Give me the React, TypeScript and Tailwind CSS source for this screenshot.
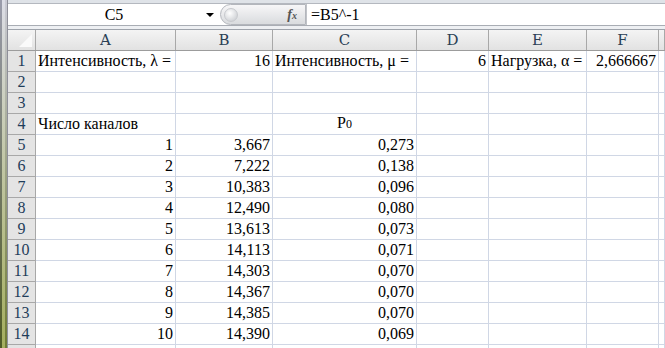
const COLS = [
  { key: "A", w: "w-[140px]" },
  { key: "B", w: "w-[97px]" },
  { key: "C", w: "w-[144px]" },
  { key: "D", w: "w-[72px]" },
  { key: "E", w: "w-[98px]" },
  { key: "F", w: "w-[72px]" },
  { key: "", w: "flex-1" },
];

type Cell = { text?: React.ReactNode; align?: "l" | "r" | "c" };

const B_VALS = ["3,667", "7,222", "10,383", "12,490", "13,613", "14,113", "14,303", "14,367", "14,385", "14,390"];
const C_VALS = ["0,273", "0,138", "0,096", "0,080", "0,073", "0,071", "0,070", "0,070", "0,070", "0,069"];

const ROWS: Cell[][] = [
  [
    { text: "Интенсивность, λ =", align: "l" },
    { text: "16", align: "r" },
    { text: "Интенсивность, μ =", align: "l" },
    { text: "6", align: "r" },
    { text: "Нагрузка, α =", align: "l" },
    { text: "2,666667", align: "r" },
  ],
  [],
  [],
  [
    { text: "Число каналов", align: "l" },
    {},
    {
      text: (
        <span>
          P<span className="text-[12px]">0</span>
        </span>
      ),
      align: "c",
    },
  ],
  ...B_VALS.map((b, i) => [
    { text: String(i + 1), align: "r" as const },
    { text: b, align: "r" as const },
    { text: C_VALS[i], align: "r" as const },
  ]),
];

const serif = "font-['Liberation_Serif','Times_New_Roman',serif]";

export default function App() {
  return (
    <div className={`w-[665px] h-[348px] overflow-hidden flex bg-white text-black ${serif}`}>
      {/* window edge */}
      <div className="w-[8px] h-full flex shrink-0">
        <div className="w-[2px] h-full bg-[linear-gradient(#9a9cab,#4f5a25)]" />
        <div className="w-[3px] h-full bg-[linear-gradient(#dcdde6,#a4ae5e)]" />
        <div className="w-[2px] h-full bg-[linear-gradient(#c9cad4,#6f7b34)]" />
        <div className="w-[1px] h-full bg-[#8e8f99]" />
      </div>

      <div className="flex-1 flex flex-col min-w-0">
        {/* formula bar */}
        <div className="h-[30px] bg-[#e3e6eb] flex flex-col shrink-0">
          <div className="h-[4px] bg-[#dfe3e8] border-b border-[#b4b8bf]" />
          <div className="h-[22px] flex items-stretch bg-white border-b border-[#a9adb4]">
            <div className={`w-[212px] relative flex items-center justify-center text-[16px] ${serif}`}>
              C5
              <span className="absolute right-[6px] top-[9px] w-0 h-0 border-l-[4px] border-r-[4px] border-t-[4px] border-l-transparent border-r-transparent border-t-black" />
            </div>
            <div className="w-[86px] rounded-l-[11px] border border-[#b3b6bc] bg-[linear-gradient(#f7f7f8,#d9dbde)] flex items-center justify-between pl-[3px] pr-[8px]">
              <span className="w-[14px] h-[14px] rounded-full bg-[radial-gradient(circle_at_40%_35%,#ffffff,#c3c6cb)] border border-[#c8cace]" />
              <span className={`italic text-[14px] text-[#555] font-bold ${serif}`}>
                f<span className="text-[10px]">x</span>
              </span>
            </div>
            <div className={`flex-1 flex items-center pl-[4px] text-[16px] border-l border-[#c0c3c8] ${serif}`}>=B5^-1</div>
          </div>
          <div className="flex-1 bg-[#eef0f3] border-b border-[#9ea3ab]" />
        </div>

        {/* column headers */}
        <div className="h-[21px] flex shrink-0 bg-[linear-gradient(#f4f4f4,#e2e2e2)] border-b border-[#9c9c9c]">
          <div className="w-[28px] shrink-0 border-r border-[#a8a8a8] relative">
            <span className="absolute right-[3px] bottom-[3px] w-0 h-0 [border-bottom:13px_solid_#fafafa] [border-left:13px_solid_transparent]" />
          </div>
          {COLS.map((c, i) => (
            <div
              key={i}
              className={`${c.w} shrink-0 border-r border-[#a8a8a8] flex items-center justify-center text-[15px] text-[#2a3f55] font-['DejaVu_Serif','Liberation_Serif',serif]`}
            >
              {c.key}
            </div>
          ))}
        </div>

        {/* rows */}
        {ROWS.map((row, r) => (
          <div key={r} className="h-[21px] flex shrink-0">
            <div className={`w-[28px] shrink-0 bg-[#e4e4e4] border-r border-b border-[#a8a8a8] flex items-end justify-center text-[16px] leading-[20px] text-[#1f3d5a] ${serif}`}>
              {r + 1}
            </div>
            {COLS.map((c, i) => {
              const cell = row[i] || {};
              const just =
                cell.align === "r" ? "justify-end" : cell.align === "c" ? "justify-center" : "justify-start";
              return (
                <div
                  key={i}
                  className={`${c.w} shrink-0 border-r border-b border-[#d0d7e5] flex items-end ${just} px-[2px] text-[16px] leading-[20px] whitespace-nowrap ${serif}`}
                >
                  {cell.text}
                </div>
              );
            })}
          </div>
        ))}
        <div className="h-[4px] flex shrink-0">
          <div className="w-[28px] shrink-0 bg-[#e4e4e4] border-r border-[#a8a8a8]" />
          {COLS.map((c, i) => (
            <div key={i} className={`${c.w} shrink-0 border-r border-[#d0d7e5]`} />
          ))}
        </div>
      </div>
    </div>
  );
}
